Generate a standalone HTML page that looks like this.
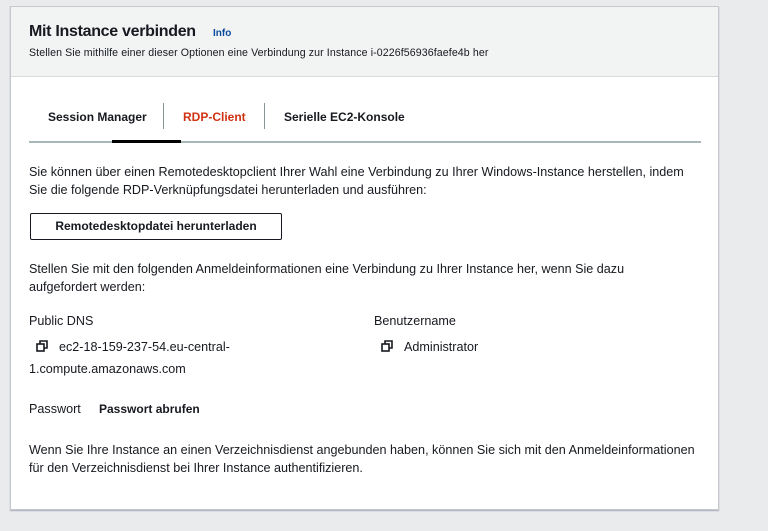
<!DOCTYPE html>
<html><head><meta charset="utf-8"><style>
*{margin:0;padding:0;box-sizing:border-box}
body{width:768px;height:531px;background:#e9ebed;font-family:"Liberation Sans",sans-serif;color:#16191f;position:relative;overflow:hidden}
.panel{position:absolute;left:10px;top:6px;width:709px;height:504px;background:#fff;border:1px solid #c5c9cc;box-shadow:0 1px 1px #aab}
.hdr{position:absolute;left:0;top:0;width:100%;height:70px;background:#f2f3f3;border-bottom:1px solid #d5dbdb}
.a{position:absolute;white-space:nowrap}
.t{font-size:12.6px}
.b{font-weight:bold}
.tb{font-size:12px;font-weight:bold}
</style></head><body>
<div class="panel">
<div class="hdr"></div>
<div class="a b" style="left:18px;top:16px;font-size:16px;letter-spacing:-0.3px">Mit Instance verbinden</div>
<div class="a b" style="left:202px;top:21px;font-size:10px;color:#0a4a9e">Info</div>
<div class="a" style="left:18px;top:40px;font-size:10.6px;letter-spacing:0.1px">Stellen Sie mithilfe einer dieser Optionen eine Verbindung zur Instance i-0226f56936faefe4b her</div>
<div class="a tb" style="left:37px;top:103px">Session Manager</div>
<div class="a" style="left:152px;top:96px;width:1px;height:26px;background:#879596"></div>
<div class="a tb" style="left:172px;top:103px;color:#d13212">RDP-Client</div>
<div class="a" style="left:253px;top:96px;width:1px;height:26px;background:#879596"></div>
<div class="a tb" style="left:273px;top:103px">Serielle EC2-Konsole</div>
<div class="a" style="left:18px;top:134px;width:672px;height:2px;background:#aab7b8"></div>
<div class="a" style="left:101px;top:133px;width:69px;height:3px;background:#000"></div>
<div class="a t" style="left:18px;top:156px;line-height:18px">Sie können über einen Remotedesktopclient Ihrer Wahl eine Verbindung zu Ihrer Windows-Instance herstellen, indem<br>Sie die folgende RDP-Verknüpfungsdatei herunterladen und ausführen:</div>
<div class="a tb" style="left:19px;top:206px;width:252px;height:27px;border:1px solid #16191f;border-radius:2px;text-align:center;line-height:25px">Remotedesktopdatei herunterladen</div>
<div class="a t" style="left:18px;top:253px;line-height:18px">Stellen Sie mit den folgenden Anmeldeinformationen eine Verbindung zu Ihrer Instance her, wenn Sie dazu<br>aufgefordert werden:</div>
<div class="a t" style="left:18px;top:307px">Public DNS</div>
<div class="a t" style="left:363px;top:307px">Benutzername</div>
<svg class="a" style="left:25px;top:333px" width="12" height="12" viewBox="0 0 12 12"><rect x="1" y="4" width="7" height="7" fill="none" stroke="#16191f" stroke-width="1.6"/><path d="M4 4V1h7v7H8" fill="none" stroke="#16191f" stroke-width="1.6"/></svg>
<div class="a t" style="left:48px;top:333px">ec2-18-159-237-54.eu-central-</div>
<div class="a t" style="left:18px;top:355px">1.compute.amazonaws.com</div>
<svg class="a" style="left:370px;top:333px" width="12" height="12" viewBox="0 0 12 12"><rect x="1" y="4" width="7" height="7" fill="none" stroke="#16191f" stroke-width="1.6"/><path d="M4 4V1h7v7H8" fill="none" stroke="#16191f" stroke-width="1.6"/></svg>
<div class="a t" style="left:393px;top:333px">Administrator</div>
<div class="a t" style="left:18px;top:395px">Passwort</div>
<div class="a tb" style="left:88px;top:395px">Passwort abrufen</div>
<div class="a t" style="left:18px;top:434px;line-height:18px">Wenn Sie Ihre Instance an einen Verzeichnisdienst angebunden haben, können Sie sich mit den Anmeldeinformationen<br>für den Verzeichnisdienst bei Ihrer Instance authentifizieren.</div>
</div>
</body></html>
